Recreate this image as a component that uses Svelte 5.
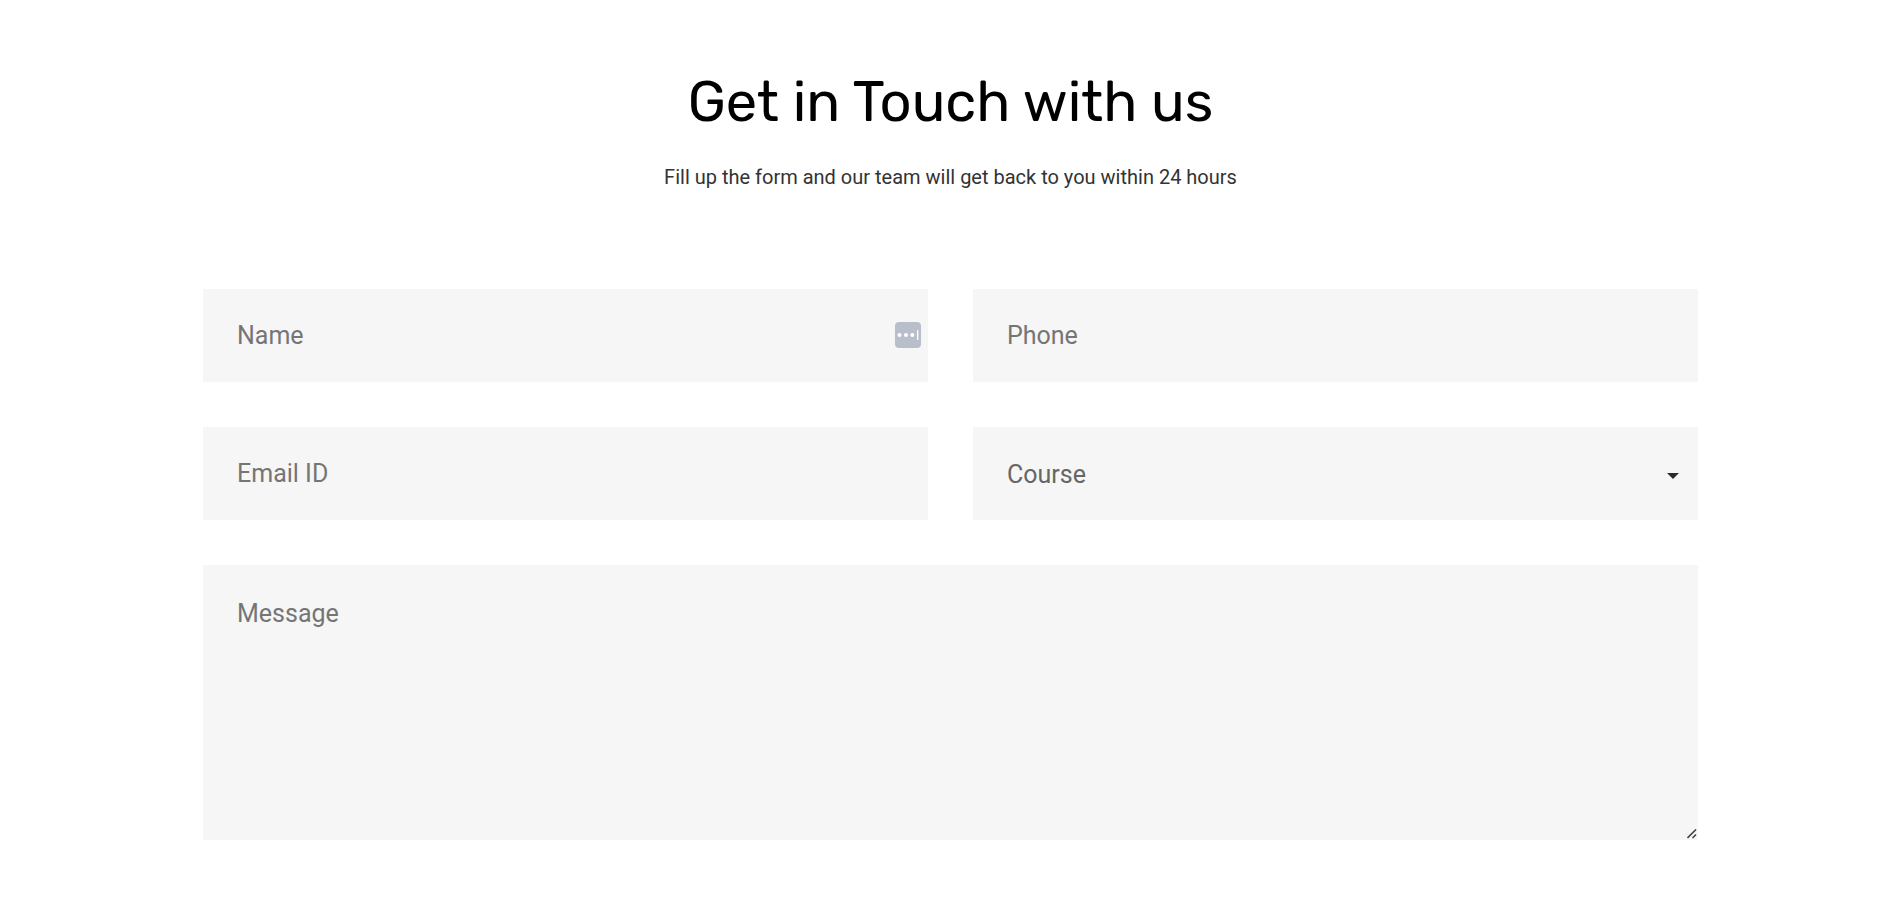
<script lang="ts">
  const courses = ['Course'];
</script>

<section class="contact">
  <header class="intro">
    <h1>Get in Touch with us</h1>
    <p>Fill up the form and our team will get back to you within 24 hours</p>
  </header>

  <form class="form">
    <div class="field">
      <input type="text" placeholder="Name" aria-label="Name" />
      <svg class="badge" width="26" height="26" viewBox="0 0 26 26" aria-hidden="true">
        <rect width="26" height="26" rx="4" fill="#b9bfca" />
        <circle cx="4.5" cy="13" r="2" fill="#fff" />
        <circle cx="11" cy="13" r="2" fill="#fff" />
        <circle cx="17.3" cy="13" r="2" fill="#fff" />
        <rect x="22" y="8" width="1.3" height="10" fill="#fff" />
      </svg>
    </div>
    <div class="field">
      <input type="tel" placeholder="Phone" aria-label="Phone" />
    </div>
    <div class="field">
      <input type="email" placeholder="Email ID" aria-label="Email ID" />
    </div>
    <div class="field">
      <select aria-label="Course">
        {#each courses as course}
          <option>{course}</option>
        {/each}
      </select>
      <svg class="caret" width="12" height="6" viewBox="0 0 12 6" aria-hidden="true">
        <path d="M0 0h12l-6 6z" fill="#2b2b2b" />
      </svg>
    </div>
    <div class="field wide">
      <textarea placeholder="Message" aria-label="Message"></textarea>
      <svg class="grip" width="10" height="10" viewBox="0 0 10 10" aria-hidden="true">
        <path d="M.5 9L9 .5M5.5 9L9 5.5" stroke="#444" stroke-width="1.6" />
      </svg>
    </div>
  </form>
</section>

<style>
  :global(body) {
    background: #fff;
  }

  .contact {
    box-sizing: border-box;
    max-width: 1498px;
    margin: 0 auto;
    padding: 68px 0 64px 3px;
    font-family: Roboto, sans-serif;
  }

  .intro {
    text-align: center;
  }

  h1 {
    margin: 0;
    color: #000;
    font-family: Rubik, Roboto, sans-serif;
    font-size: 56px;
    font-weight: 400;
    line-height: 68px;
  }

  p {
    margin: 26px 0 0;
    color: #333;
    font-size: 20px;
    line-height: 30px;
  }

  .form {
    display: grid;
    grid-template-columns: 1fr 1fr;
    gap: 45px;
    margin-top: 97px;
  }

  .field {
    position: relative;
    display: flex;
  }

  .wide {
    grid-column: 1 / -1;
  }

  input,
  select,
  textarea {
    box-sizing: border-box;
    width: 100%;
    height: 93px;
    margin: 0;
    padding: 0 34px;
    border: 0;
    border-radius: 0;
    background: #f6f6f6;
    color: #666;
    font-family: inherit;
    font-size: 25px;
    line-height: 30px;
    appearance: none;
  }

  select {
    padding-top: 2px;
  }

  textarea {
    height: 275px;
    padding: 34px;
    resize: vertical;
  }

  textarea::-webkit-resizer {
    background: transparent;
  }

  ::placeholder {
    color: #757575;
    opacity: 1;
  }

  .badge {
    position: absolute;
    top: 33px;
    right: 7px;
  }

  .caret {
    position: absolute;
    top: 46px;
    right: 19px;
    pointer-events: none;
  }

  .grip {
    position: absolute;
    right: 1px;
    bottom: 1px;
    pointer-events: none;
  }
</style>
